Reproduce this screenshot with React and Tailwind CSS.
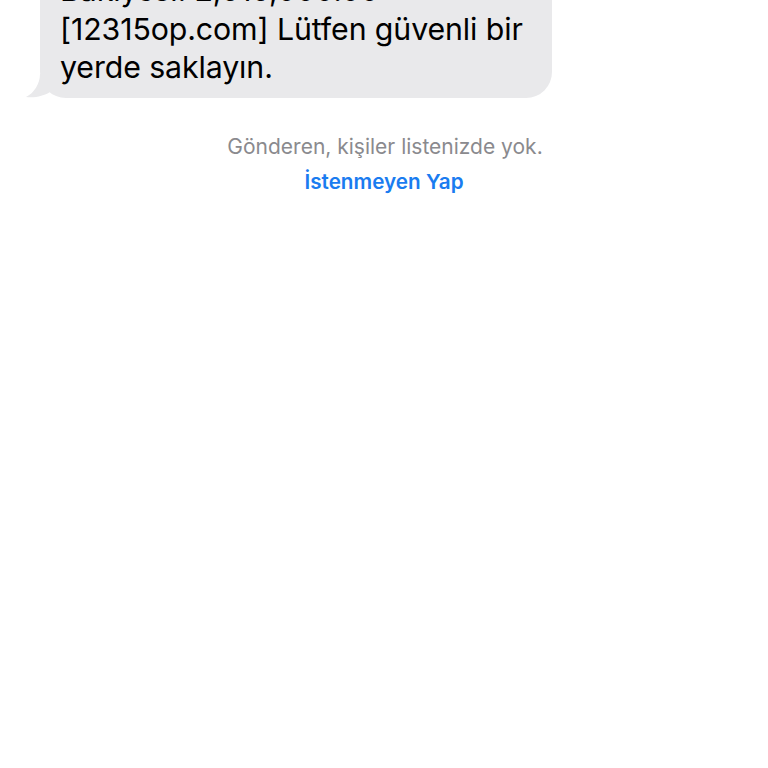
export default function App() {
  return (
    <div
      className="w-full h-[768px] bg-white overflow-hidden"
      style={{ fontFamily: "Inter, 'Noto Sans', sans-serif" }}
    >
      {/* incoming bubble, cut off by the top edge */}
      <div className="relative ml-[40px] -mt-[40px] w-[512px]">
        <div className="bg-[#e9e9eb] rounded-[26px] pl-[20px] pr-[12px] pt-[11px] pb-[11px] text-[30.3px] leading-[38.5px] text-black tracking-[-0.1px]">
          Bakiyesi: 2,515,000.00
          <br />
          [12315op.com] Lütfen güvenli bir
          <br />
          yerde saklayın.
        </div>
        <svg
          className="absolute left-[-14px] bottom-0"
          width="30"
          height="24"
          viewBox="0 0 30 24"
        >
          <path
            d="M14 0 C14 10 8 19 0 23 C9 24 18 22 24 18 L30 18 L30 0 Z"
            fill="#e9e9eb"
          />
        </svg>
      </div>

      {/* notice */}
      <div className="flex flex-col items-center mt-[37px]">
        <p className="text-[21px] leading-[24px] text-[#8a8a8e] pl-[2px]">
          Gönderen, kişiler listenizde yok.
        </p>
        <button className="mt-[11px] text-[20.7px] leading-[24px] font-semibold text-[#1a7cf0]">
          İstenmeyen Yap
        </button>
      </div>
    </div>
  );
}
